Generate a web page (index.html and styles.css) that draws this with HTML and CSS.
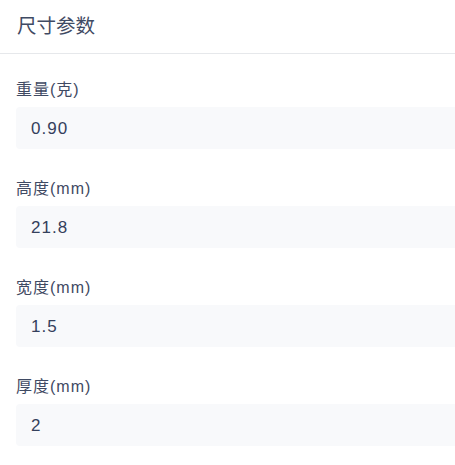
FILE: index.html
```html
<!DOCTYPE html>
<html lang="zh">
<head>
<meta charset="utf-8">
<link rel="stylesheet" href="styles.css">
</head>
<body>
<div class="panel">
  <div class="panel-header">尺寸参数</div>
  <div class="panel-body">
    <div class="field">
      <div class="field-label">重量(克)</div>
      <div class="field-value">0.90</div>
    </div>
    <div class="field">
      <div class="field-label">高度(mm)</div>
      <div class="field-value">21.8</div>
    </div>
    <div class="field">
      <div class="field-label">宽度(mm)</div>
      <div class="field-value">1.5</div>
    </div>
    <div class="field">
      <div class="field-label">厚度(mm)</div>
      <div class="field-value">2</div>
    </div>
  </div>
</div>
</body>
</html>
```
FILE: styles.css
```css
html, body {
  margin: 0;
  padding: 0;
  background: #ffffff;
  overflow: hidden;
}
body {
  font-family: "Liberation Sans", "Noto Sans CJK SC", sans-serif;
  color: #3b4763;
}
.panel {
  width: 455px;
}
.panel-header {
  height: 53px;
  line-height: 53px;
  padding: 0 17px;
  font-size: 19.5px;
  color: #3f4a63;
  border-bottom: 1px solid #e6e8eb;
}
.panel-body {
  padding: 25px 0 0 16px;
  display: flex;
  flex-direction: column;
  gap: 29px;
}
.field {
  display: flex;
  flex-direction: column;
  gap: 6px;
}
.field-label {
  font-size: 16px;
  line-height: 22px;
  letter-spacing: 1px;
  color: #3f4a63;
}
.field-value {
  height: 42px;
  line-height: 44px;
  width: calc(100% + 20px);
  box-sizing: border-box;
  padding-left: 15px;
  background: #f8f9fb;
  border-radius: 4px;
  font-size: 17px;
  letter-spacing: 1px;
  color: #34405c;
}
```
